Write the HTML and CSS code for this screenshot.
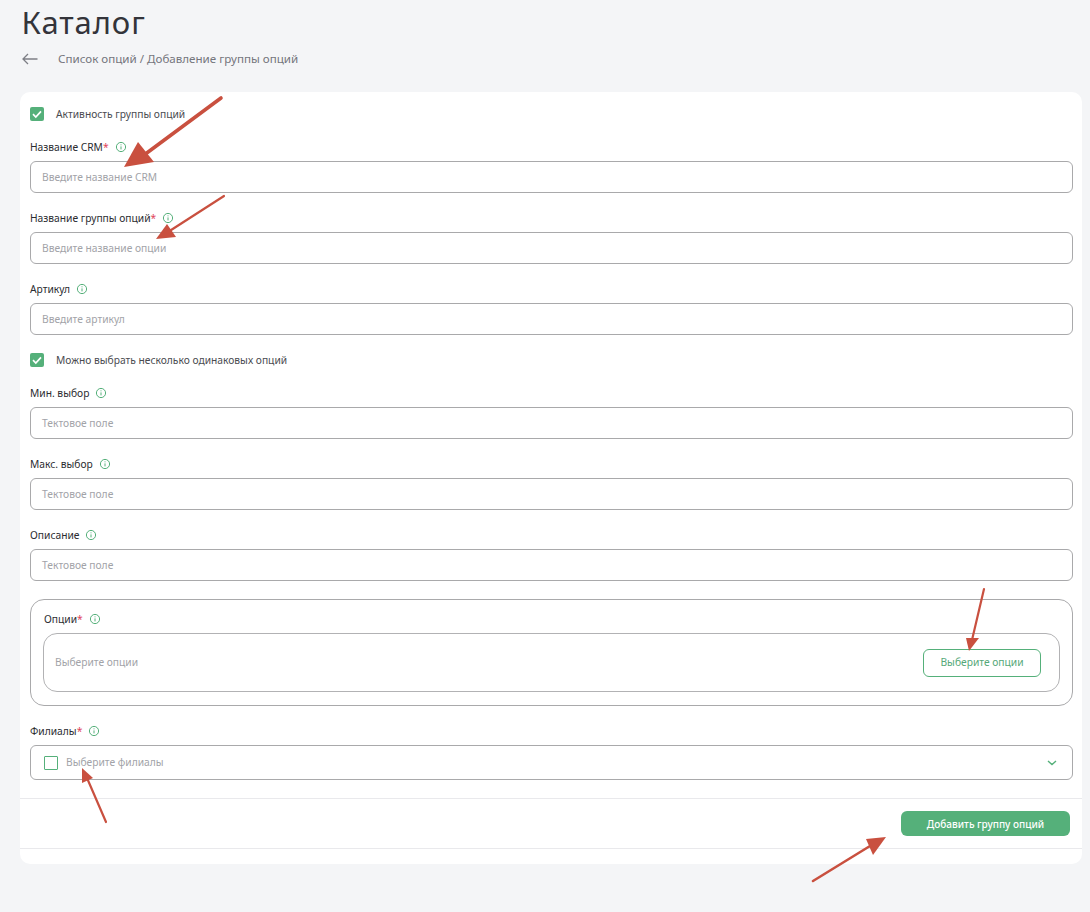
FILE: index.html
```html
<!DOCTYPE html>
<html lang="ru">
<head>
<meta charset="utf-8">
<title>Каталог</title>
<link rel="stylesheet" href="styles.css">
</head>
<body>
<svg width="0" height="0" class="defs"><defs>
<symbol id="info" viewBox="0 0 12 12"><circle cx="6" cy="6" r="4.6" fill="none" stroke="#55b07a" stroke-width="1"/><path d="M6 5.4v3M6 3.4v.9" fill="none" stroke="#55b07a" stroke-width="1"/></symbol>
<symbol id="check" viewBox="0 0 14 14"><path d="M3 7.2l2.8 2.8L11 4.4" fill="none" stroke="#fff" stroke-width="1.7"/></symbol>
</defs></svg>
<main class="page">
  <h1 class="title">Каталог</h1>
  <div class="crumbs">
    <svg class="back" width="16" height="12" viewBox="0 0 16 12"><path d="M15.5 6H1M6 1L1 6l5 5" fill="none" stroke="#7d7f86" stroke-width="1.3"/></svg>
    <span>Список опций / Добавление группы опций</span>
  </div>
  <form class="card">
    <div class="body">
      <label class="check check-first"><span class="box on"><svg width="14" height="14"><use href="#check"/></svg></span>Активность группы опций</label>
      <div class="field"><div class="label">Название CRM<i>*</i><svg class="info" width="12" height="12"><use href="#info"/></svg></div><div class="input">Введите название CRM</div></div>
      <div class="field"><div class="label">Название группы опций<i>*</i><svg class="info" width="12" height="12"><use href="#info"/></svg></div><div class="input">Введите название опции</div></div>
      <div class="field"><div class="label">Артикул<svg class="info" width="12" height="12"><use href="#info"/></svg></div><div class="input">Введите артикул</div></div>
      <label class="check check-mid"><span class="box on"><svg width="14" height="14"><use href="#check"/></svg></span>Можно выбрать несколько одинаковых опций</label>
      <div class="field field-tight"><div class="label">Мин. выбор<svg class="info" width="12" height="12"><use href="#info"/></svg></div><div class="input">Тектовое поле</div></div>
      <div class="field"><div class="label">Макс. выбор<svg class="info" width="12" height="12"><use href="#info"/></svg></div><div class="input">Тектовое поле</div></div>
      <div class="field"><div class="label">Описание<svg class="info" width="12" height="12"><use href="#info"/></svg></div><div class="input">Тектовое поле</div></div>
      <section class="options">
        <div class="label options-label">Опции<i>*</i><svg class="info" width="12" height="12"><use href="#info"/></svg></div>
        <div class="options-box"><span class="options-text">Выберите опции</span><button type="button" class="outline">Выберите опции</button></div>
      </section>
      <div class="field field-branch"><div class="label">Филиалы<i>*</i><svg class="info" width="12" height="12"><use href="#info"/></svg></div>
        <div class="select"><span class="box"></span><span class="select-text">Выберите филиалы</span>
          <svg class="chev" width="10" height="6" viewBox="0 0 10 6"><path d="M1 1l4 3.6L9 1" fill="none" stroke="#55b07a" stroke-width="1.4"/></svg>
        </div>
      </div>
    </div>
    <div class="footer"><button type="button" class="primary">Добавить группу опций</button></div>
  </form>
</main>
<svg class="arrows" width="1090" height="912" viewBox="0 0 1090 912">
  <g stroke="#c9503f" fill="#c9503f" stroke-linecap="round">
    <path d="M221 98L140 158" stroke-width="3.6" fill="none"/><path d="M124 167L138 142L154 162Z" stroke="none"/>
    <path d="M224 196L168 232" stroke-width="2.2" fill="none"/><path d="M156 239L167 224L176 237Z" stroke="none"/>
    <path d="M984 589L972 640" stroke-width="2.2" fill="none"/><path d="M969 651L966 638L979 638Z" stroke="none"/>
    <path d="M106 822L87 778" stroke-width="2.2" fill="none"/><path d="M82 768L82 783L93 778Z" stroke="none"/>
    <path d="M813 881L870 846" stroke-width="2.6" fill="none"/><path d="M886 837L866 839L873 855Z" stroke="none"/>
  </g>
</svg>
</body>
</html>
```
FILE: styles.css
```css
* { box-sizing: border-box; }
html, body { margin: 0; }
body {
  width: 1090px;
  height: 912px;
  overflow: hidden;
  background: #f4f5f7;
  font-family: "Noto Sans", "Open Sans", sans-serif;
  color: #2e2e33;
  position: relative;
}
.defs { position: absolute; }
.page { padding: 3px 8px 0 20px; }
.title {
  margin: 0 0 0 1.5px;
  font-size: 31px;
  line-height: 38px;
  font-weight: 400;
  letter-spacing: 0.9px;
  color: #33343a;
}
.crumbs {
  display: flex;
  align-items: center;
  gap: 20px;
  height: 20px;
  margin: 8px 0 23px 2px;
  font-size: 11.6px;
  color: #74767d;
}
.crumbs span { position: relative; top: -1px; }
.card {
  background: #fff;
  border-radius: 10px;
  height: 772px;
}
.body { padding: 13px 9px 0 10px; height: 706px; }
.check {
  display: flex;
  align-items: center;
  gap: 12px;
  height: 18px;
  font-size: 10.25px;
  color: #4a4b50;
}
.check-first { margin-bottom: 14px; }
.check-mid { margin-top: 16px; margin-bottom: 14px; }
.box {
  width: 14px;
  height: 14px;
  flex: none;
  border-radius: 2px;
  border: 1px solid #55b07a;
  display: block;
}
.box.on { background: #55b07a; border: 0; }
.box svg { display: block; }
.field { margin-bottom: 15px; }
.field-tight { margin-top: 0; }
.label {
  display: flex;
  align-items: center;
  height: 20px;
  margin-bottom: 4px;
  font-size: 10.25px;
  color: #2b2c30;
}
.label i { color: #e0455a; font-style: normal; margin-left: 0; }
.info { margin-left: 6px; }
.input {
  height: 32px;
  border: 1px solid #a9a9ab;
  border-radius: 6px;
  padding: 0 11px;
  display: flex;
  align-items: center;
  font-size: 10.25px;
  color: #a2a3a8;
}
.field:nth-last-of-type(1) { margin-bottom: 0; }
.options {
  margin-top: 18px;
  height: 107px;
  border: 1px solid #a9a9ab;
  border-radius: 14px;
  padding: 9px 12px 13px 12px;
}
.options .label { margin-bottom: 4px; }
.options-label { padding-left: 1px; }
.options-box {
  height: 59px;
  border: 1px solid #b2b2b4;
  border-radius: 14px;
  display: flex;
  align-items: center;
  justify-content: space-between;
  padding: 0 18px 0 11px;
  font-size: 10.25px;
  color: #a2a3a8;
}
.options-text { padding-bottom: 1px; }
.outline {
  width: 118px;
  height: 28px;
  background: #fff;
  border: 1px solid #55b07a;
  border-radius: 6px;
  font: inherit;
  color: #55a878;
  padding: 0 0 1px;
}
.field-branch { margin-top: 15px; }
.select {
  height: 35px;
  border: 1px solid #a9a9ab;
  border-radius: 6px;
  padding: 0 15px 0 13px;
  display: flex;
  align-items: center;
  font-size: 10.25px;
  color: #a2a3a8;
}
.select .box { border-radius: 1px; }
.select-text { margin-left: 8px; flex: 1; padding-bottom: 1px; }
.footer {
  height: 51px;
  margin-top: 0;
  border-top: 1px solid #e9e9ec;
  border-bottom: 1px solid #e9e9ec;
  display: flex;
  justify-content: flex-end;
  align-items: center;
  padding: 0 12px 0 0;
}
.primary {
  width: 169px;
  height: 25px;
  border: 0;
  border-radius: 6px;
  background: #55b07a;
  color: #fff;
  font: 500 10px "Noto Sans", sans-serif;
  padding: 0;
}
.arrows { position: absolute; left: 0; top: 0; pointer-events: none; }
```
